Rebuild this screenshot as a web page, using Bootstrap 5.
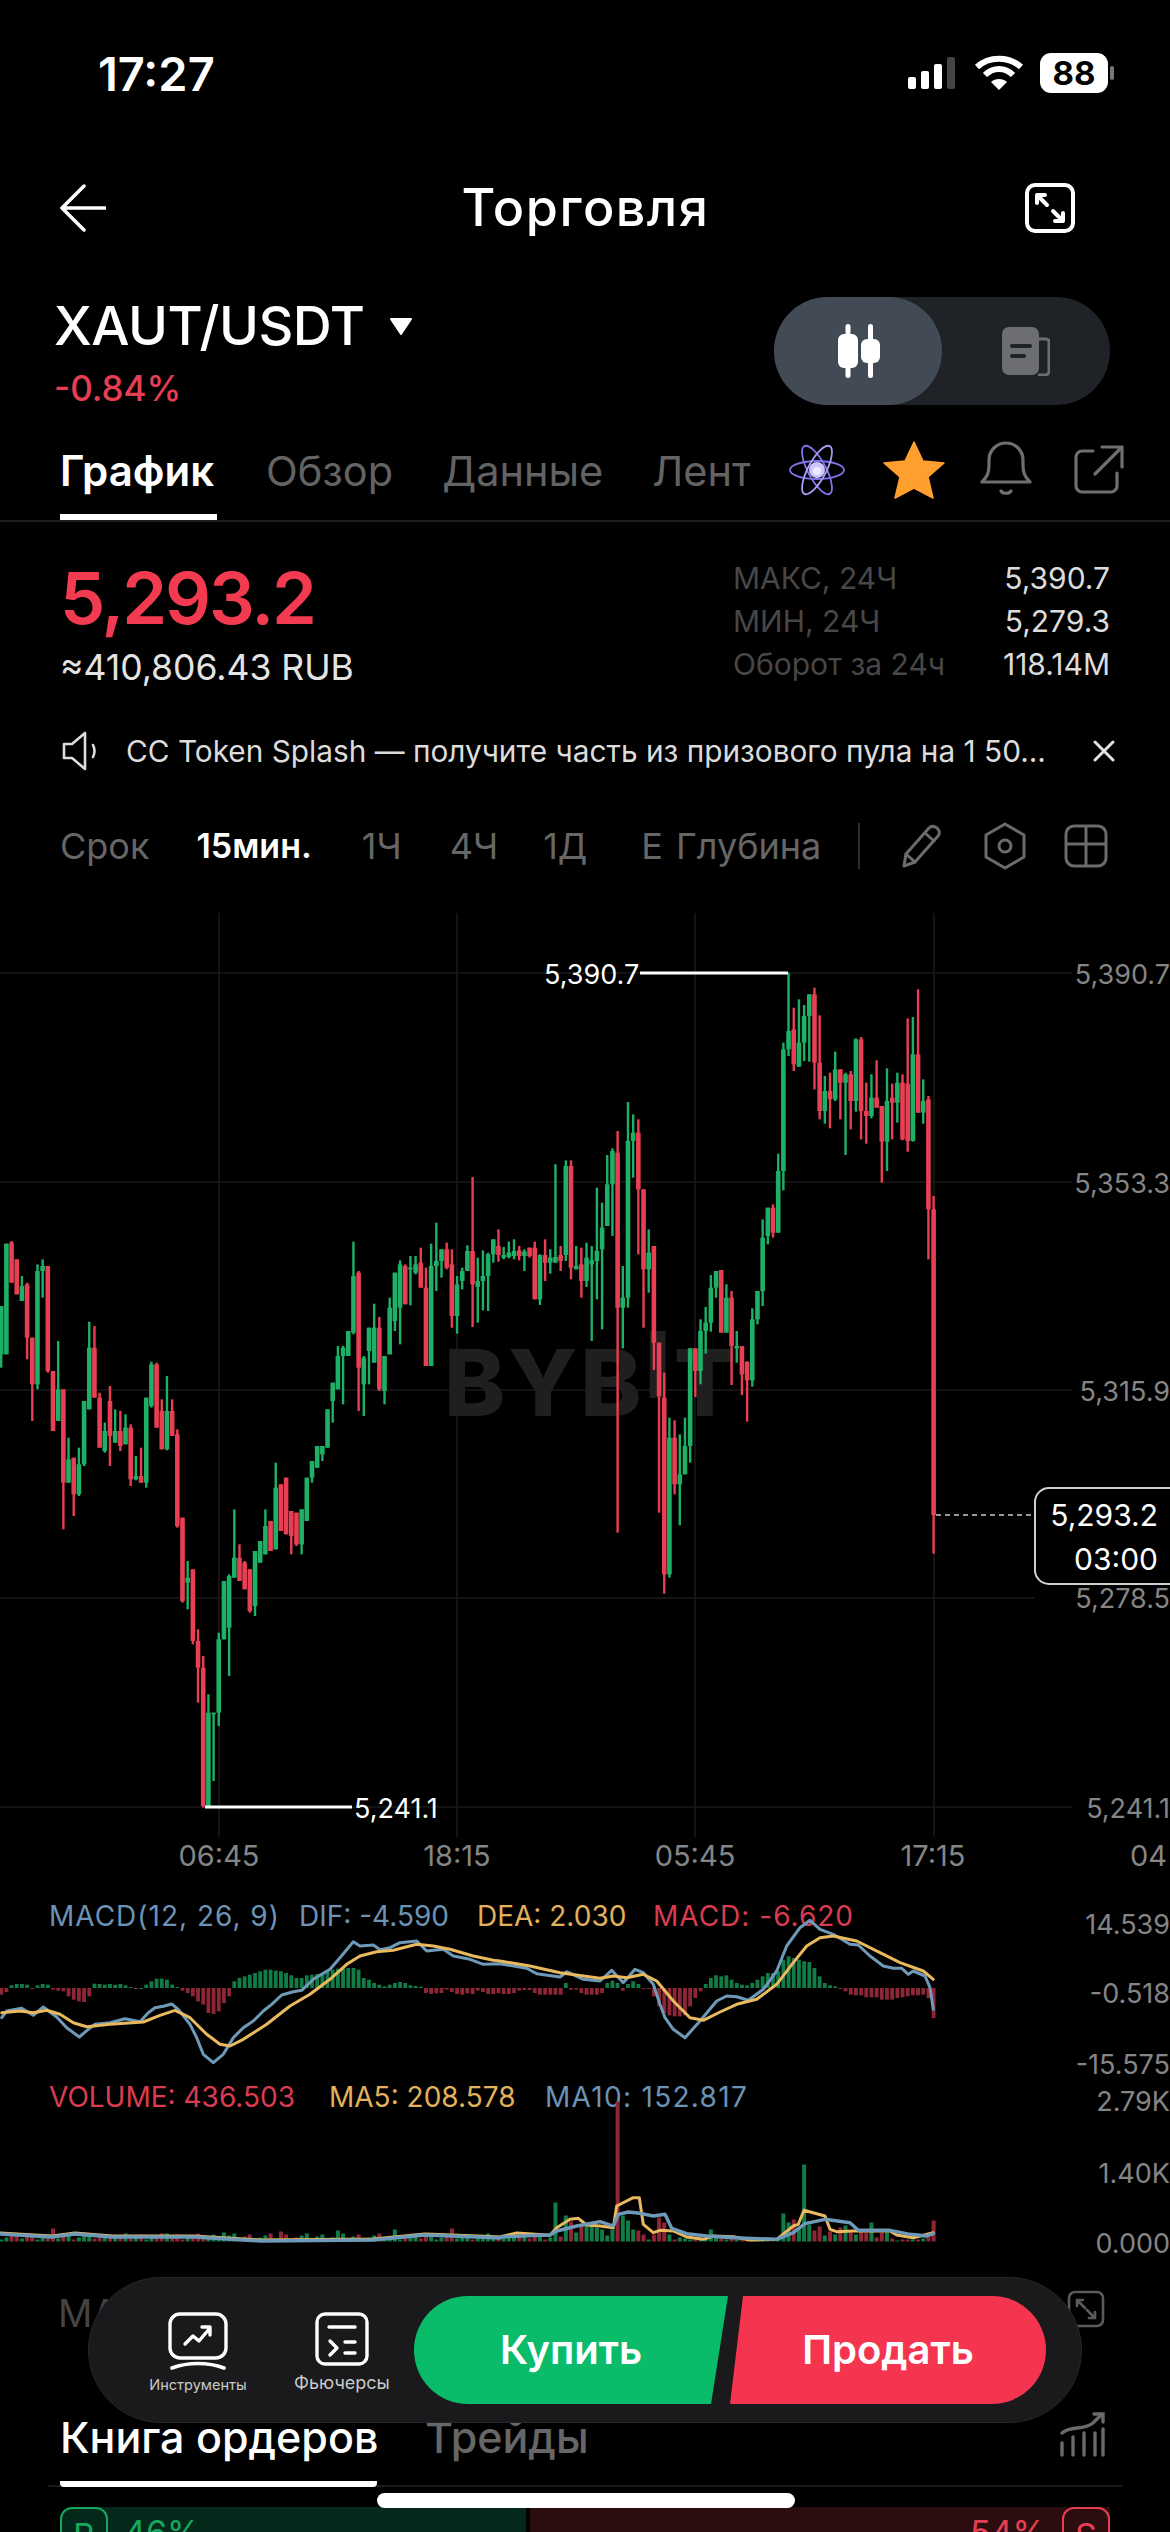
<!DOCTYPE html>
<html lang="ru" data-bs-theme="dark">
<head>
    <meta charset="UTF-8">
    <title>Торговля</title>
    <link href="https://cdn.jsdelivr.net/npm/bootstrap@5.3.0/dist/css/bootstrap.min.css" rel="stylesheet">
    <style>
        body {
            background: #000;
            color: #fff;
            font-family: Inter, "Liberation Sans", sans-serif;
        }

        .phone {
            width: 1170px;
            height: 2532px;
            overflow: hidden;
            background: #000;
        }

        .status-row { height: 146px; padding: 0 54px 0 98px; }
        .status-time { font-size: 47px; font-weight: 600; line-height: 1; }
        .top-row { height: 124px; padding: 0 95px 0 60px; }
        .top-title { font-size: 52px; font-weight: 500; letter-spacing: 1.5px; margin-left: 40px; }
        .pair-row { height: 150px; padding: 27px 60px 0 54px; }
        .pair-name { font-size: 54px; font-weight: 500; line-height: 60px; margin-top: -1px; letter-spacing: -.5px; }
        .pair-change { font-size: 35px; font-weight: 500; color: #e63e52; line-height: 44px; margin-top: 10px; }

        .mode-switch {
            width: 336px;
            height: 108px;
            border-radius: 54px;
            background: #1f2226;
        }
        .mode-on {
            width: 168px;
            border-radius: 54px;
            background: #424a55;
        }

        .tab-row {
            height: 102px;
            padding-left: 60px;
            border-bottom: 2px solid #1e1e1e;
        }
        .tab-item { font-size: 41.5px; color: #636363; line-height: 102px; height: 100px; margin-right: 49px; }
        .tab-on { font-size: 42px; color: #fff; font-weight: 600; border-bottom: 6px solid #fff; width: 157px; white-space: nowrap; }
        .tab-cut { width: 98px; margin-right: 0; overflow: hidden; }

        .price-row { height: 190px; padding: 32px 60px 0 60px; }
        .price-big { font-size: 72px; font-weight: 600; color: #f23b50; line-height: 88px; letter-spacing: -2.1px; }
        .price-sub { font-size: 35.5px; color: #e4e4e4; line-height: 46px; margin-top: 3px; }
        .stat-box { width: 377px; font-size: 30px; line-height: 43px; margin-top: 3px; }
        .stat-label { color: #474747; }
        .stat-value { color: #dcdcdc; }

        .notice-row { height: 78px; padding: 0 55px 0 62px; font-size: 29.8px; color: #dcdcdc; }
        .notice-text { margin-left: 28px; width: 930px; white-space: nowrap; }

        .range-row { height: 111px; padding: 0 62px 0 60px; font-size: 36px; color: #666; }
        .range-item { white-space: nowrap; }
        .range-on { color: #fff; font-weight: 600; font-size: 34px; }
        .range-line { width: 2px; height: 46px; background: #2c2c2c; }

        .chart-svg { display: block; width: 1170px; height: 1360px; }
        .axis-text { font-size: 27px; fill: #858585; }
        .time-text { font-size: 29px; fill: #858585; }
        .mark-text { font-size: 27px; fill: #fff; }
        .legend-text { font-size: 28px; }
        .water-text { font-size: 92px; font-weight: 800; fill: #1f1f1f; letter-spacing: 3px; }

        .ma-row { height: 138px; padding: 24px 65px 0 58px; font-size: 38px; color: #444; }
        .book-row {
            height: 88px;
            margin: 0 48px;
            padding: 0 17px 0 12px;
            border-bottom: 2px solid #1b1b1b;
        }
        .book-item { font-size: 43px; font-weight: 500; color: #666; line-height: 76px; height: 88px; margin-right: 48px; }
        .book-on { color: #fff; border-bottom: 6px solid #fff; border-radius: 0 0 4px 4px; width: 317px; white-space: nowrap; }

        .ratio-row { height: 60px; margin: 20px 60px 0 60px; font-size: 34px; }
        .ratio-buy { width: 466px; background: #04291b; color: #17a660; border-radius: 12px 0 0 0; }
        .ratio-sell { background: #2b0d10; color: #e63e52; margin-left: 4px; }
        .ratio-tag { width: 48px; height: 60px; border: 2px solid; border-radius: 12px; text-align: center; line-height: 54px; }

        .action-bar {
            left: 88px;
            top: 2277px;
            width: 994px;
            height: 146px;
            padding-left: 37px;
            border-radius: 73px;
            background: #1a1a1c;
            border: 1px solid #262628;
        }
        .action-item { width: 144px; height: 108px; padding-top: 16px; color: #c9c9c9; }
        .action-small { font-size: 14.5px; margin-top: 4px; white-space: nowrap; }
        .action-mid { font-size: 18px; margin-top: 6px; line-height: 22px; white-space: nowrap; }
        .buy-btn, .sell-btn {
            height: 108px;
            font-size: 40px;
            font-weight: 600;
            color: #fff;
        }
        .buy-btn {
            width: 314px;
            background: #0abb6a;
            border-radius: 54px 0 0 54px;
            clip-path: polygon(0 0, 100% 0, calc(100% - 17px) 100%, 0 100%);
        }
        .sell-btn {
            width: 316px;
            margin-left: 2px;
            background: #f5344f;
            border-radius: 0 54px 54px 0;
            clip-path: polygon(13px 0, 100% 0, 100% 100%, 0 100%);
        }
        .home-bar {
            left: 377px;
            top: 2493px;
            width: 418px;
            height: 15px;
            border-radius: 8px;
            background: #fff;
        }
    </style>
</head>
<body>
    <div class="phone position-relative">

        <!-- Status bar -->
        <div class="status-row d-flex align-items-center justify-content-between">
            <span class="status-time">17:27</span>
            <div class="d-flex align-items-center">
                <svg width="50" height="34" viewBox="0 0 50 34">
                    <rect x="0" y="21" width="8" height="12" rx="2" fill="#fff"/>
                    <rect x="13" y="15" width="8" height="18" rx="2" fill="#fff"/>
                    <rect x="26" y="8" width="8" height="25" rx="2" fill="#fff"/>
                    <rect x="39" y="1" width="8" height="32" rx="2" fill="#444"/>
                </svg>
                <svg class="ms-3" width="50" height="36" viewBox="0 0 50 36" fill="none" stroke="#fff" stroke-width="6">
                    <path d="M3 12 C15 1 35 1 47 12"/>
                    <path d="M11 20 C19 12 31 12 39 20"/>
                    <path d="M25 35 L17 27 C21 23 29 23 33 27 Z" fill="#fff" stroke="none"/>
                </svg>
                <svg class="ms-3" width="76" height="40" viewBox="0 0 76 40">
                    <rect x="0" y="0" width="68" height="40" rx="11" fill="#fff"/>
                    <rect x="70" y="13" width="4" height="14" rx="2" fill="#777"/>
                    <text x="34" y="32" text-anchor="middle" font-size="33" font-weight="700" fill="#000">88</text>
                </svg>
            </div>
        </div>

        <!-- Title bar -->
        <div class="top-row d-flex align-items-center justify-content-between">
            <svg width="46" height="48" viewBox="0 0 46 48" fill="none" stroke="#fff" stroke-width="3.5" stroke-linecap="round" stroke-linejoin="round">
                <path d="M45 24 H2 M24 2 L2 24 L24 46"/>
            </svg>
            <span class="top-title">Торговля</span>
            <svg width="50" height="50" viewBox="0 0 50 50" fill="none" stroke="#fff" stroke-width="4" stroke-linecap="round" stroke-linejoin="round">
                <rect x="2" y="2" width="46" height="46" rx="8"/>
                <path d="M12 20 V12 H20 M12 12 L22 22 M38 30 V38 H30 M38 38 L28 28"/>
            </svg>
        </div>

        <!-- Pair and view switch -->
        <div class="pair-row d-flex justify-content-between">
            <div>
                <div class="d-flex align-items-center pair-name">XAUT/USDT
                    <svg style="margin-left:25px" width="24" height="18" viewBox="0 0 24 18"><path d="M2 2 H22 L12 17 Z" fill="#fff" stroke="#fff" stroke-width="2" stroke-linejoin="round"/></svg>
                </div>
                <div class="pair-change">-0.84%</div>
            </div>
            <div class="mode-switch d-flex">
                <div class="mode-on d-flex align-items-center justify-content-center">
                    <svg width="44" height="54" viewBox="0 0 44 54" fill="#fff">
                        <rect x="9.5" y="0" width="5" height="54" rx="2.5"/>
                        <rect x="2" y="10" width="20" height="34" rx="6"/>
                        <rect x="32" y="0" width="5" height="54" rx="2.5"/>
                        <rect x="25" y="15" width="19" height="24" rx="6"/>
                    </svg>
                </div>
                <div class="flex-grow-1 d-flex align-items-center justify-content-center">
                    <svg width="48" height="50" viewBox="0 0 48 50">
                        <path d="M36 13 H44 A3 3 0 0 1 47 16 V45 A4 4 0 0 1 43 49 H36" fill="none" stroke="#6c6e72" stroke-width="3"/>
                        <rect x="0" y="1" width="37" height="48" rx="7" fill="#6c6e72"/>
                        <path d="M10 20 H28 M10 30 H22" stroke="#1f2226" stroke-width="4" stroke-linecap="round"/>
                    </svg>
                </div>
            </div>
        </div>

        <!-- Tabs -->
        <div class="tab-row d-flex">
            <div class="tab-item tab-on">График</div>
            <div class="tab-item">Обзор</div>
            <div class="tab-item">Данные</div>
            <div class="tab-item tab-cut">Лент</div>
            <div class="d-flex align-items-center">
                <svg class="tab-icon" width="60" height="60" viewBox="0 0 60 60" style="margin-left:37px" fill="none" stroke-width="1.8">
                    <ellipse cx="30" cy="30" rx="27" ry="9" stroke="#7f74ea"/>
                    <ellipse cx="30" cy="30" rx="27" ry="9" stroke="#7f74ea" transform="rotate(62 30 30)"/>
                    <ellipse cx="30" cy="30" rx="27" ry="9" stroke="#a99df5" transform="rotate(-62 30 30)"/>
                    <circle cx="30" cy="30" r="8" fill="#cfc7fb"/>
                    <circle cx="30" cy="31" r="4" fill="#efeaff"/>
                </svg>
                <svg width="62" height="60" viewBox="0 0 62 60" style="margin-left:36px">
                    <path d="M31 2 L40 21 L61 23 L45 37 L50 58 L31 48 L12 58 L17 37 L1 23 L22 21 Z" fill="#ff9f2e" stroke="#ff9f2e" stroke-width="1.5" stroke-linejoin="round"/>
                </svg>
                <svg width="52" height="58" viewBox="0 0 52 58" style="margin-left:35px" fill="none" stroke="#6f6f6f" stroke-width="3.2" stroke-linecap="round" stroke-linejoin="round">
                    <path d="M2 41 H50 C45 36 43 32 43 24 V19 C43 9 35 2 26 2 C17 2 9 9 9 19 V24 C9 32 7 36 2 41 Z"/>
                    <path d="M21 50 C23 53 29 53 31 50"/>
                </svg>
                <svg width="50" height="50" viewBox="0 0 50 50" style="margin-left:42px" fill="none" stroke="#6f6f6f" stroke-width="3.2" stroke-linecap="round" stroke-linejoin="round">
                    <path d="M19 6 H8 A6 6 0 0 0 2 12 V41 A6 6 0 0 0 8 47 H37 A6 6 0 0 0 43 41 V28"/>
                    <path d="M21 29 L48 2 M28 2 H48 V22"/>
                </svg>
            </div>
        </div>

        <!-- Price block -->
        <div class="price-row d-flex justify-content-between">
            <div>
                <div class="price-big">5,293.2</div>
                <div class="price-sub">≈410,806.43 RUB</div>
            </div>
            <div class="stat-box">
                <div class="d-flex justify-content-between"><span class="stat-label">МАКС, 24Ч</span><span class="stat-value">5,390.7</span></div>
                <div class="d-flex justify-content-between"><span class="stat-label">МИН, 24Ч</span><span class="stat-value">5,279.3</span></div>
                <div class="d-flex justify-content-between"><span class="stat-label">Оборот за 24ч</span><span class="stat-value">118.14M</span></div>
            </div>
        </div>

        <!-- Notice -->
        <div class="notice-row d-flex align-items-center">
            <svg width="36" height="40" viewBox="0 0 36 40" fill="none" stroke="#dcdcdc" stroke-width="2.6" stroke-linejoin="round" stroke-linecap="round">
                <path d="M2 13 H10 L23 2 V38 L10 27 H2 Z"/>
                <path d="M31 14 C33 18 33 22 31 26"/>
            </svg>
            <div class="notice-text">CC Token Splash — получите часть из призового пула на 1 50...</div>
            <svg class="ms-auto" width="22" height="22" viewBox="0 0 22 22" stroke="#e4e4e4" stroke-width="3" stroke-linecap="round">
                <path d="M2 2 L20 20 M20 2 L2 20"/>
            </svg>
        </div>

        <!-- Timeframes -->
        <div class="range-row d-flex align-items-center">
            <span class="range-item">Срок</span>
            <span class="range-item range-on" style="margin-left:47px">15мин.</span>
            <span class="range-item" style="margin-left:50px">1Ч</span>
            <span class="range-item" style="margin-left:48px">4Ч</span>
            <span class="range-item" style="margin-left:45px">1Д</span>
            <span class="range-item" style="margin-left:54px">Е</span>
            <span class="range-item" style="margin-left:13px">Глубина</span>
            <span class="range-line" style="margin-left:37px"></span>
            <svg width="42" height="44" viewBox="0 0 42 44" style="margin-left:41px" fill="none" stroke="#6b6b6b" stroke-width="3" stroke-linejoin="round" stroke-linecap="round">
                <path d="M3 42 L5 30 L28 4 C30 2 33 2 36 4 C39 7 39 10 37 12 L14 38 Z"/>
                <path d="M5 30 L14 38 M24 9 L33 17"/>
            </svg>
            <svg width="44" height="48" viewBox="0 0 44 48" style="margin-left:40px" fill="none" stroke="#6b6b6b" stroke-width="3" stroke-linejoin="round">
                <path d="M22 2 L41 13 V35 L22 46 L3 35 V13 Z"/>
                <circle cx="22" cy="24" r="6"/>
            </svg>
            <svg class="ms-auto" width="44" height="44" viewBox="0 0 44 44" fill="none" stroke="#6b6b6b" stroke-width="3">
                <rect x="2" y="2" width="40" height="40" rx="8"/>
                <path d="M22 2 V42 M2 20 H42"/>
            </svg>
        </div>

        <!-- Chart, drawn in page coordinates -->
        <svg class="chart-svg" id="chart" viewBox="0 900 1170 1360">
            <g stroke="#1a1a1c" stroke-width="1.6">
                <path d="M0 972 H1072 M0 1181 H1072 M0 1389 H1072 M0 1597 H1034 M0 1806 H1072"/>
                <path d="M219 912 V1836 M457 912 V1836 M695 912 V1836 M934 912 V1836"/>
            </g>
            <text class="water-text" x="444" y="1415">BY<tspan>B</tspan><tspan dy="-18">I</tspan><tspan dy="18">T</tspan></text>
            <g id="candles"></g>
            <path d="M640 972 H788 M205 1806 H352" stroke="#fff" stroke-width="3" fill="none"/>
            <text class="mark-text" x="544" y="983">5,390.7</text>
            <text class="mark-text" x="354" y="1817">5,241.1</text>
            <g text-anchor="end">
                <text class="axis-text" x="1170" y="983">5,390.7</text>
                <text class="axis-text" x="1170" y="1192">5,353.3</text>
                <text class="axis-text" x="1170" y="1400">5,315.9</text>
                <text class="axis-text" x="1170" y="1607">5,278.5</text>
                <text class="axis-text" x="1170" y="1817">5,241.1</text>
                <text class="axis-text" x="1170" y="1933">14.539</text>
                <text class="axis-text" x="1170" y="2002">-0.518</text>
                <text class="axis-text" x="1170" y="2073">-15.575</text>
                <text class="axis-text" x="1170" y="2110">2.79K</text>
                <text class="axis-text" x="1170" y="2182">1.40K</text>
                <text class="axis-text" x="1170" y="2252">0.000</text>
            </g>
            <g text-anchor="middle">
                <text class="time-text" x="219" y="1865">06:45</text>
                <text class="time-text" x="457" y="1865">18:15</text>
                <text class="time-text" x="695" y="1865">05:45</text>
                <text class="time-text" x="933" y="1865">17:15</text>
            </g>
            <text class="time-text" x="1130" y="1865">04</text>

            <path d="M936 1514 H1034" stroke="#c8c8c8" stroke-width="1.5" stroke-dasharray="5 4"/>
            <rect x="1035" y="1487" width="150" height="96" rx="14" fill="#000" stroke="#d0d0d0" stroke-width="2"/>
            <g text-anchor="end" fill="#fff" font-size="30">
                <text x="1158" y="1525">5,293.2</text>
                <text x="1158" y="1569">03:00</text>
            </g>

            <g class="legend-text">
                <text x="49" y="1925" fill="#6c93b5" letter-spacing="1">MACD(12, 26, 9)</text>
                <text x="299" y="1925" fill="#6c93b5">DIF: -4.590</text>
                <text x="477" y="1925" fill="#e2b15c">DEA: 2.030</text>
                <text x="653" y="1925" fill="#d93c50" letter-spacing="1">MACD: -6.620</text>
                <text x="49" y="2106" fill="#d93c50">VOLUME: 436.503</text>
                <text x="329" y="2106" fill="#e2b15c">MA5: 208.578</text>
                <text x="545" y="2106" fill="#6c93b5" letter-spacing="1.3">MA10: 152.817</text>
            </g>
            <g id="lower"></g>
        </svg>

        <!-- Row under the floating bar -->
        <div class="ma-row d-flex justify-content-between">
            <span>MA</span>
            <svg width="38" height="38" viewBox="0 0 38 38" style="margin-top:5px" fill="none" stroke="#5a5a5a" stroke-width="2.6" stroke-linecap="round" stroke-linejoin="round">
                <rect x="2" y="2" width="34" height="34" rx="6"/>
                <path d="M10 16 V10 H16 M10 10 L18 18 M28 22 V28 H22 M28 28 L20 20"/>
            </svg>
        </div>

        <!-- Order book tabs -->
        <div class="book-row d-flex justify-content-between">
            <div class="d-flex">
                <div class="book-item book-on">Книга ордеров</div>
                <div class="book-item">Трейды</div>
            </div>
            <svg width="46" height="46" viewBox="0 0 46 46" fill="none" stroke="#6a6a6a" stroke-width="3.4" stroke-linecap="round" style="margin-top:12px">
                <path d="M3 44 V32 M14 44 V26 M25 44 V22 M36 44 V22 M44 44 V18"/>
                <path d="M3 22 C12 14 24 20 34 12 L43 3 M35 3 H44 V11"/>
            </svg>
        </div>

        <!-- Buy / sell ratio, cut by the bottom of the screen -->
        <div class="ratio-row d-flex">
            <div class="ratio-buy d-flex">
                <span class="ratio-tag">B</span>
                <span class="ms-3">46%</span>
            </div>
            <div class="ratio-sell flex-grow-1 d-flex justify-content-end">
                <span class="me-3">54%</span>
                <span class="ratio-tag">S</span>
            </div>
        </div>

        <!-- Floating action bar -->
        <div class="action-bar position-absolute d-flex align-items-center">
            <div class="action-item d-flex flex-column align-items-center">
                <svg width="60" height="58" viewBox="0 0 60 58" fill="none" stroke="#fff" stroke-width="3.4" stroke-linecap="round" stroke-linejoin="round">
                    <rect x="2" y="2" width="56" height="44" rx="10"/>
                    <path d="M17 32 L25 24 L31 29 L42 16 M34 15 H42 V23"/>
                    <path d="M4 56 C20 50 40 50 56 56" stroke-width="3.6"/>
                </svg>
                <span class="action-small">Инструменты</span>
            </div>
            <div class="action-item d-flex flex-column align-items-center">
                <svg width="54" height="54" viewBox="0 0 54 54" fill="none" stroke="#fff" stroke-width="3.4" stroke-linecap="round" stroke-linejoin="round">
                    <rect x="2" y="2" width="50" height="50" rx="8"/>
                    <path d="M14 15 H40 M15 29 L22 36 L15 43 M30 30 H40 M30 41 H40"/>
                </svg>
                <span class="action-mid">Фьючерсы</span>
            </div>
            <button class="buy-btn btn border-0 d-flex align-items-center justify-content-center">Купить</button>
            <button class="sell-btn btn border-0 d-flex align-items-center justify-content-center">Продать</button>
        </div>

        <div class="home-bar position-absolute"></div>
    </div>

    <script src="https://cdn.jsdelivr.net/npm/bootstrap@5.3.0/dist/js/bootstrap.bundle.min.js"></script>
    <script>
        const SVG_NS = 'http://www.w3.org/2000/svg';
        const GREEN = '#1fb067', RED = '#e83f53';
        const barX = i => 1.2 + 5.18 * i;
        const priceY = u => 900 + u / 3;

        // 1 = up, 0 = down, then wick top, body top, body bottom, wick bottom (3x crop units)
        const CANDLES = [
            [1,1215,1215,1360,1400],[1,1028,1028,1360,1360],[0,1020,1025,1145,1145],[0,1075,1075,1180,1180],[1,1125,1155,1200,1200],
            [0,1145,1150,1310,1375],[0,1310,1310,1450,1560],[1,1090,1110,1450,1465],[1,1075,1095,1110,1190],[0,1095,1095,1410,1415],
            [0,1410,1410,1590,1590],[1,1320,1465,1560,1560],[0,1465,1465,1745,1885],[1,1610,1675,1745,1745],[0,1670,1670,1780,1845],
            [1,1640,1690,1780,1785],[1,1500,1500,1690,1695],[1,1262,1340,1525,1525],[0,1275,1340,1490,1490],[0,1475,1490,1640,1640],
            [1,1565,1590,1650,1655],[0,1455,1500,1605,1695],[1,1525,1590,1625,1625],[0,1530,1590,1635,1650],[1,1540,1580,1630,1630],
            [0,1570,1580,1735,1755],[1,1665,1725,1735,1738],[0,1640,1725,1745,1745],[1,1490,1490,1745,1760],[1,1382,1390,1515,1520],
            [0,1385,1390,1580,1580],[0,1495,1530,1645,1645],[1,1425,1530,1645,1648],[0,1495,1530,1605,1605],[0,1585,1600,1875,1880],
            [0,1850,1850,2100,2105],[1,1980,2030,2045,2125],[0,2005,2005,2220,2230],[0,2185,2220,2300,2405],[0,2265,2300,2715,2720],
            [1,2380,2435,2715,2720],[1,2435,2435,2440,2640],[1,2195,2215,2435,2475],[1,2040,2040,2215,2215],[1,2020,2025,2180,2325],
            [1,1825,1970,2030,2030],[0,1930,1970,2040,2040],[0,1980,1985,2065,2065],[0,2005,2005,2130,2135],[1,1950,1950,2115,2145],
            [1,1920,1920,1985,1985],[1,1825,1875,1960,1960],[0,1860,1860,1950,1950],[1,1685,1760,1945,1945],[0,1750,1750,1890,1890],
            [0,1730,1730,1900,1900],[0,1830,1830,1905,1960],[0,1835,1835,1930,1935],[1,1825,1825,1930,1960],[1,1730,1730,1860,1860],
            [1,1680,1680,1730,1745],[1,1635,1635,1700,1700],[1,1635,1635,1660,1680],[1,1525,1525,1640,1640],[1,1445,1445,1500,1565],
            [1,1335,1365,1465,1465],[1,1335,1340,1365,1510],[1,1290,1290,1365,1365],[1,1022,1125,1295,1300],[0,1110,1115,1400,1530],
            [1,1365,1370,1450,1545],[1,1280,1280,1350,1450],[1,1208,1280,1385,1385],[0,1248,1280,1465,1470],[1,1365,1365,1470,1510],
            [1,1190,1220,1360,1360],[1,1115,1115,1260,1290],[1,1078,1090,1220,1330],[0,1090,1095,1210,1210],[1,1065,1100,1105,1213],
            [1,1065,1090,1115,1120],[0,1040,1085,1160,1160],[0,1100,1160,1395,1395],[1,1028,1095,1395,1395],[1,965,1080,1095,1170],
            [1,1045,1045,1080,1130],[0,1025,1045,1100,1105],[0,1045,1090,1245,1280],[1,1125,1150,1245,1298],[1,1100,1110,1140,1165],
            [1,1033,1050,1110,1110],[0,828,1050,1150,1278],[1,1070,1140,1158,1265],[1,1048,1125,1140,1228],[1,1055,1060,1125,1230],
            [1,1015,1015,1060,1085],[0,985,1035,1062,1082],[1,1038,1062,1070,1075],[1,1022,1055,1068,1072],[1,1015,1050,1065,1075],
            [0,1035,1048,1065,1078],[1,1045,1052,1065,1110],[0,1040,1040,1065,1070],[0,1022,1040,1195,1195],[1,1060,1062,1195,1212],
            [0,1015,1062,1085,1140],[1,1045,1070,1085,1118],[1,790,1068,1085,1085],[0,1035,1062,1080,1110],[1,778,795,1062,1080],
            [0,778,795,1100,1135],[1,1035,1095,1105,1105],[0,1040,1090,1140,1190],[1,1025,1070,1140,1158],[1,1035,1078,1090,1320],
            [1,860,1050,1080,1195],[1,905,980,1045,1285],[1,762,850,975,975],[1,742,750,850,1005],[0,690,755,1220,1895],
            [1,1095,1190,1220,1342],[1,603,720,1190,1220],[1,640,695,720,830],[0,655,695,865,1060],[0,865,865,1105,1280],
            [1,985,1055,1105,1175],[0,1035,1035,1325,1407],[0,1325,1325,1485,1835],[0,1415,1490,2020,2078],[1,1550,1610,2020,2030],
            [0,1558,1610,1750,1780],[1,1600,1720,1750,1873],[1,1550,1635,1720,1720],[1,1342,1342,1635,1685],[0,1342,1342,1410,1488],
            [1,1255,1290,1410,1450],[1,1218,1265,1290,1358],[1,1122,1160,1265,1292],[1,1110,1110,1160,1190],[0,1107,1107,1295,1295],
            [1,1150,1190,1295,1295],[0,1170,1190,1335,1452],[1,1290,1335,1342,1385],[0,1335,1335,1420,1482],[0,1382,1382,1438,1562],
            [1,1222,1255,1438,1457],[1,1170,1170,1255,1270],[1,955,1010,1170,1215],[1,920,920,1005,1030],[0,910,920,995,1010],
            [1,758,810,995,995],[1,425,445,810,868],[1,215,390,445,465],[0,320,385,490,510],[1,295,425,497,497],
            [1,312,345,425,480],[1,280,280,345,482],[0,260,280,485,565],[0,343,485,630,655],[1,525,570,630,668],
            [0,515,570,595,682],[1,452,505,595,600],[0,505,505,545,655],[1,515,520,545,762],[0,510,520,600,685],
            [1,412,415,600,632],[0,408,415,630,715],[0,545,630,645,728],[1,520,590,645,652],[0,478,590,620,620],
            [0,615,615,722,845],[1,502,600,722,810],[0,548,590,605,715],[1,515,545,605,665],[0,520,545,715,718],
            [0,352,548,720,752],[1,348,460,720,722],[0,265,460,635,635],[1,535,600,635,668],[0,585,595,925,1075],
            [0,885,925,1842,1958]
        ];

        const HIST = [
            -20,-12,8,12,12,10,-2,8,12,10,-5,-8,-10,-25,-35,-40,-42,-25,13,12,10,12,10,12,8,3,-1,0,10,20,
            28,28,25,10,3,-8,-15,-25,-40,-50,-75,-78,-70,-45,-25,20,30,35,40,45,50,55,55,52,50,45,38,30,30,38,
            40,42,45,50,55,58,60,60,60,55,30,25,15,10,5,10,15,18,15,8,6,4,-15,-18,-16,-15,-5,-12,-18,-20,
            -16,-18,-8,-12,-18,-18,-16,-18,-18,-15,-8,-6,-6,-15,-20,-20,-20,-20,-20,15,-5,-5,-15,-20,-20,-20,-15,15,22,15,
            -8,12,20,12,-3,-3,-25,-55,-75,-82,-85,-85,-82,-55,-30,-10,12,30,38,35,38,25,15,10,8,15,25,35,45,45,
            50,85,95,90,85,80,78,60,35,15,8,5,-3,-10,-20,-22,-22,-28,-28,-28,-35,-35,-35,-30,-28,-25,-22,-22,-20,-30,-90
        ];

        const VOL_END = [
            39,5,26,20,9,16,17,18,14,12,6,12,140,26,21,12,11,7,2,7,24,19,7,2,4,3,2,2,2,4,12,4,3,2,3,2,2,3,2,3,2,2,3,3,
            28,19,22,14,77,17,11,15,6,10,7,14,16,9,7,12,9,19,4,9,9,3,1,2,2,2,2,3,6,21
        ];

        // line points as read from the 3x crops
        const DIF_A = [[5,410],[20,390],[65,382],[100,403],[130,378],[170,408],[200,440],[238,468],[265,445],[285,430],[330,425],[375,413],[420,422],[445,395],[465,380],[490,376],[515,369],[535,385],[570,430],[590,470],[610,520],[640,545],[670,520],[700,470],[730,440],[760,420],[790,390],[815,370],[845,342],[880,332],[905,328],[940,295],[990,265],[1020,230],[1060,182],[1080,195],[1120,192],[1140,206],[1170,200],[1200,185],[1250,180],[1280,210],[1330,205],[1360,225],[1410,235],[1450,250]];
        const DIF_B = [[0,248],[80,262],[110,278],[180,288],[200,272],[250,295],[300,300],[335,268],[370,305],[405,265],[430,275],[460,310],[480,370],[495,410],[520,445],[555,470],[600,420],[650,360],[680,345],[710,347],[745,358],[790,325],[830,270],[860,195],[900,140],[930,118],[960,145],[1000,160],[1050,190],[1075,192],[1110,225],[1150,255],[1180,262],[1205,262],[1225,280],[1240,270],[1275,285],[1290,320],[1300,385]];
        const DEA_A = [[5,395],[60,390],[100,395],[140,388],[180,400],[220,425],[260,437],[330,430],[430,423],[480,403],[525,388],[570,410],[620,460],[660,490],[690,495],[730,475],[800,430],[870,375],[930,340],[990,295],[1040,250],[1080,225],[1130,212],[1180,208],[1250,190],[1300,195],[1350,205],[1420,225],[1480,238]];
        const DEA_B = [[0,240],[90,255],[180,275],[300,292],[340,285],[380,290],[430,280],[470,300],[520,360],[570,410],[610,418],[660,393],[710,370],[770,355],[830,310],[880,245],[920,195],[960,170],[1000,165],[1070,180],[1140,215],[1200,245],[1270,270],[1300,295]];
        const MA5 = [[0,408],[50,396],[150,403],[170,380],[210,355],[235,352],[260,372],[300,375],[340,380],[350,315],[400,290],[418,290],[430,370],[460,395],[480,388],[520,390],[560,408],[610,415],[640,405],[700,407],[750,417],[830,415],[880,375],[895,370],[912,328],[975,345],[990,385],[1010,392],[1060,390],[1170,390],[1190,402],[1240,410],[1300,395]];
        const MA10 = [[0,408],[80,404],[150,402],[170,390],[230,375],[300,362],[340,375],[355,340],[385,333],[420,337],[460,345],[495,340],[515,382],[560,398],[620,405],[700,410],[830,415],[880,395],[915,368],[975,355],[1050,365],[1075,388],[1170,388],[1230,400],[1280,405],[1300,398]];
        const VOL_LEFT = [[0,2232],[52,2235],[75,2232],[112,2235],[194,2235],[261,2239],[373,2238],[425,2233],[478,2235],[500,2236]];

        function addShape(parent, tag, attrs) {
            const el = document.createElementNS(SVG_NS, tag);
            Object.keys(attrs).forEach(k => el.setAttribute(k, attrs[k]));
            parent.appendChild(el);
        }

        function addBar(parent, x, y1, y2, w, color) {
            addShape(parent, 'rect', { x: x - w / 2, y: Math.min(y1, y2), width: w, height: Math.max(Math.abs(y2 - y1), 1), fill: color });
        }

        function addLine(parent, pts, color, width) {
            addShape(parent, 'polyline', {
                points: pts.map(p => p[0].toFixed(1) + ',' + p[1].toFixed(1)).join(' '),
                fill: 'none', stroke: color, 'stroke-width': width, 'stroke-linejoin': 'round', 'stroke-linecap': 'round'
            });
        }

        function renderCandles() {
            const box = document.getElementById('candles');
            CANDLES.forEach((c, i) => {
                const color = c[0] ? GREEN : RED;
                addBar(box, barX(i), priceY(c[1]), priceY(c[4]), 2.4, color);
                addBar(box, barX(i), priceY(c[2]), priceY(c[3]), 4.6, color);
            });
        }

        function renderLower() {
            const box = document.getElementById('lower');

            // MACD histogram
            HIST.forEach((v, i) => {
                addBar(box, barX(i), 1987, 1987 - v / 3, 3.8, v >= 0 ? '#117c46' : '#8f2636');
            });
            const macdA = p => [p[0] / 3, 1880 + p[1] / 3];
            const macdB = p => [500 + p[0] / 3, 1880 + p[1] / 3];
            addLine(box, DIF_A.map(macdA).concat(DIF_B.map(macdB)), '#6d9ab8', 3);
            addLine(box, DEA_A.map(macdA).concat(DEA_B.map(macdB)), '#e8b95e', 3);

            // Volume
            CANDLES.forEach((c, i) => {
                const h = i >= 107 ? VOL_END[i - 107] : 2 + (i * 37) % 7 + (i % 11 === 10 ? 5 : 0);
                addBar(box, barX(i), 2240.5, 2240.5 - h, 4, c[0] ? '#117c46' : '#8f2636');
            });
            const vol = p => [500 + p[0] / 3, 2100 + p[1] / 3];
            addLine(box, VOL_LEFT.concat(MA5.map(vol)), '#e8b95e', 3);
            addLine(box, VOL_LEFT.map(p => [p[0], p[1] + 1]).concat(MA10.map(vol)), '#6d9ab8', 3.4);
        }

        window.onload = () => {
            renderCandles();
            renderLower();
        };
    </script>
</body>
</html>
